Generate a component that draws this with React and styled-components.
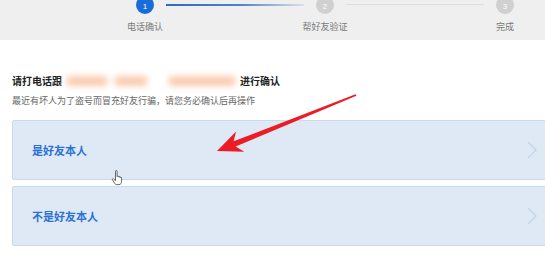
import React from "react";
import styled, { createGlobalStyle } from "styled-components";

const GlobalStyle = createGlobalStyle`
  html, body {
    margin: 0;
    padding: 0;
    background: #fff;
  }
  body {
    font-family: "Noto Sans CJK SC", "Noto Sans", sans-serif;
    width: 545px;
    height: 260px;
    overflow: hidden;
  }
`;

const SPage = styled.div`
  position: relative;
  width: 545px;
  height: 260px;
  overflow: hidden;
`;

const SStepBand = styled.div`
  height: 40px;
  background: #efefef;
  overflow: hidden;
`;

const SStepRow = styled.div`
  display: flex;
  align-items: flex-start;
  margin-top: -4px;
  padding-left: 136px;
`;

const SStep = styled.div`
  display: flex;
  flex-direction: column;
  align-items: center;
  width: 18px;
`;

const SCircle = styled.div`
  width: 18px;
  height: 18px;
  border-radius: 50%;
  background: ${(p) => (p.active ? "#1a6dd8" : "#d0d0d0")};
  color: #fff;
  font-size: 8px;
  font-family: "Liberation Sans", sans-serif;
  display: flex;
  align-items: center;
  justify-content: center;
  padding-top: 3px;
  box-sizing: border-box;
`;

const SStepLabel = styled.div`
  margin-top: 7px;
  font-size: 9px;
  line-height: 12px;
  color: #7a7a7a;
  white-space: nowrap;
`;

const SConnector = styled.div`
  width: 138px;
  margin: 8px 12px 0;
  height: ${(p) => (p.done ? "2px" : "1px")};
  background: ${(p) =>
    p.done
      ? "linear-gradient(to right, #2d6bc2, #4d85cc 55%, #dde2e8)"
      : "#dedede"};
`;

const SContent = styled.div`
  padding-left: 12px;
`;

const STitle = styled.h2`
  margin: 34px 0 0;
  font-size: 10px;
  line-height: 14px;
  font-weight: 700;
  color: #222;
  display: flex;
  align-items: center;
`;

const SBlur = styled.span`
  display: inline-block;
  width: ${(p) => p.w}px;
  height: 10px;
  margin-left: ${(p) => p.gap}px;
  border-radius: 5px;
  background: #f9bf9c;
  filter: blur(3px);
  opacity: 0.8;
`;

const STitleTail = styled.span`
  margin-left: 4px;
`;

const SNotice = styled.p`
  margin: 7px 0 0;
  font-size: 9px;
  line-height: 12px;
  color: #666;
`;

const SOptions = styled.div`
  margin-top: 13px;
  margin-right: -14px;
  display: flex;
  flex-direction: column;
  gap: 6px;
`;

const SOption = styled.div`
  height: 60px;
  box-sizing: border-box;
  border: 1px solid #cbd9ec;
  border-radius: 2px;
  background: #dfe9f6;
  display: flex;
  align-items: center;
  justify-content: space-between;
  padding: 0 21px 0 19px;
`;

const SOptionText = styled.span`
  font-size: 11px;
  font-weight: 700;
  color: #2b72d4;
`;

const SOverlay = styled.svg`
  position: absolute;
  left: 0;
  top: 0;
  width: 545px;
  height: 260px;
  pointer-events: none;
`;

const Chevron = () => (
  <svg width="10" height="18" viewBox="0 0 10 18">
    <polyline
      points="1,1 9,9 1,17"
      fill="none"
      stroke="#c3d3e7"
      strokeWidth="1.3"
    />
  </svg>
);

const steps = [
  { n: 1, label: "电话确认" },
  { n: 2, label: "帮好友验证" },
  { n: 3, label: "完成" },
];

const options = ["是好友本人", "不是好友本人"];

export default function App() {
  return (
    <SPage>
      <GlobalStyle />
      <SStepBand>
        <SStepRow>
          {steps.map((s, i) => (
            <React.Fragment key={s.n}>
              {i > 0 && <SConnector done={i === 1} />}
              <SStep>
                <SCircle active={i === 0}>{s.n}</SCircle>
                <SStepLabel>{s.label}</SStepLabel>
              </SStep>
            </React.Fragment>
          ))}
        </SStepRow>
      </SStepBand>

      <SContent>
        <STitle>
          请打电话跟
          <SBlur w={42} gap={4} />
          <SBlur w={34} gap={6} />
          <SBlur w={68} gap={20} />
          <STitleTail>进行确认</STitleTail>
        </STitle>
        <SNotice>最近有坏人为了盗号而冒充好友行骗，请您务必确认后再操作</SNotice>

        <SOptions>
          {options.map((o) => (
            <SOption key={o}>
              <SOptionText>{o}</SOptionText>
              <Chevron />
            </SOption>
          ))}
        </SOptions>
      </SContent>

      <SOverlay viewBox="0 0 545 260">
        <polygon
          fill="#ec1c24"
          points="217,151 236.1,131.5 233.6,141.3 355.6,94.2 356.4,95.8 235.6,146.5 244.3,151.8"
        />
        <g transform="translate(112,170)">
          <path
            d="M3.5 1.2 c0-.9 1.6-.9 1.6 0 v5.3 c0-.8 1.5-.8 1.5 0 v.6 c0-.8 1.5-.8 1.5 0 v.6 c0-.8 1.5-.8 1.5.1 v3.6 c0 1.8-1 3.2-2.6 3.2 h-2.3 c-1 0-1.7-.6-2.3-1.6 l-1.9-3.1 c-.5-.8.5-1.6 1.2-.9 l1.8 1.7 z"
            fill="#fff"
            stroke="#444"
            strokeWidth="0.8"
            strokeLinejoin="round"
          />
        </g>
      </SOverlay>
    </SPage>
  );
}
